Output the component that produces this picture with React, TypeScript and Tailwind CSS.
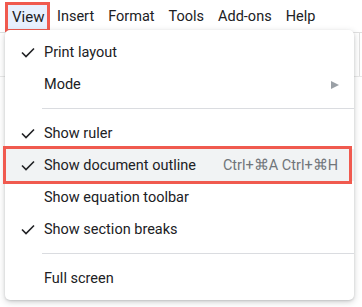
import React from "react";

const font = { fontFamily: "Roboto, 'Liberation Sans', sans-serif" };

function Check() {
  return (
    <svg width="14" height="11" viewBox="0 0 14 11" className="shrink-0">
      <path d="M1 5.5 L5 9.5 L13 1.5" fill="none" stroke="#202124" strokeWidth="1.6" />
    </svg>
  );
}

function Item({
  label,
  checked,
  shortcut,
  submenu,
  active,
}: {
  label: string;
  checked?: boolean;
  shortcut?: string;
  submenu?: boolean;
  active?: boolean;
}) {
  return (
    <div className={`relative flex h-8 items-center pl-[16px] pr-[16px] pt-px ${active ? "bg-[#f1f3f4]" : ""}`}>
      <div className="flex w-[23px] items-center">{checked && <Check />}</div>
      <span className="text-[14.5px] text-[#202124]">{label}</span>
      {shortcut && <span className="ml-auto text-[14.5px] text-[#70757a]">{shortcut}</span>}
      {submenu && (
        <svg width="8" height="8" viewBox="0 0 8 8" className="ml-auto mr-[-1px]">
          <path d="M0 0 L8 4 L0 8 Z" fill="#9aa0a6" />
        </svg>
      )}
      {active && (
        <div className="pointer-events-none absolute -top-[3px] -bottom-[3px] -left-[2px] right-[2px] border-[3px] border-[#f05a4f]" />
      )}
    </div>
  );
}

function Sep() {
  return <div className="my-2 ml-[37px] h-px bg-[#dadce0]" />;
}

export default function App() {
  return (
    <div className="relative h-[307px] w-[362px] overflow-hidden bg-white" style={font}>
      {/* faint toolbar lines behind the menu */}
      <div className="absolute left-0 right-0 top-[32px] h-px bg-[#e0e0e0]" />
      <div className="absolute left-0 right-0 top-[76px] h-px bg-[#e8e8e8]" />
      <div className="absolute left-[359px] top-[33px] h-[43px] w-px bg-[#e0e0e0]" />

      {/* Menu bar */}
      <div className="relative flex items-center pl-[5px] pt-[2px] text-[14.5px] text-[#202124]">
        <div className="flex h-[30px] w-[45px] items-center border-[3px] border-[#f05a4f] bg-[#e8f0fe] pl-[4px] text-[15px]">View</div>
        <div className="flex items-center gap-[14px] pl-[7px]">
          <span>Insert</span>
          <span>Format</span>
          <span>Tools</span>
          <span>Add-ons</span>
          <span>Help</span>
        </div>
      </div>

      {/* Dropdown */}
      <div className="absolute left-[5px] top-[30px] w-[349px] rounded-[5px] bg-white py-[6px] shadow-[0_2px_6px_rgba(60,64,67,0.25),0_1px_2px_rgba(60,64,67,0.15)]">
        <Item label="Print layout" checked />
        <Item label="Mode" submenu />
        <Sep />
        <Item label="Show ruler" checked />
        <Item label="Show document outline" checked shortcut="Ctrl+⌘A Ctrl+⌘H" active />
        <Item label="Show equation toolbar" />
        <Item label="Show section breaks" checked />
        <Sep />
        <Item label="Full screen" />
      </div>
    </div>
  );
}
